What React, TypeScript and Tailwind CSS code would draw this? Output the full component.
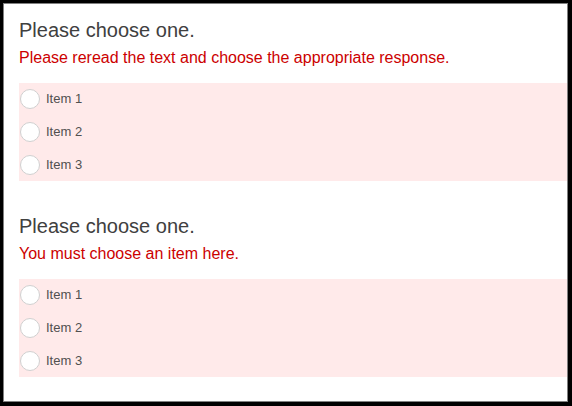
const items = ["Item 1", "Item 2", "Item 3"];

function Question({ error, first }: { error: string; first?: boolean }) {
  return (
    <div className={first ? "" : "mt-[33px]"}>
      <h3 className="text-[20px] leading-[24px] text-[#404040]">Please choose one.</h3>
      <p className="mt-[6px] text-[16px] leading-[20px] text-[#cc0000]">{error}</p>
      <div className="mt-[15px] bg-[#ffeaea]">
        {items.map((item, i) => (
          <label
            key={item}
            className={`flex items-center gap-[6px] pl-px ${i === 0 ? "h-8" : "h-[33px]"}`}
          >
            <span className="h-5 w-5 rounded-full border border-[#d0d0d0] bg-white" />
            <span className="text-[13px] text-[#505050]">{item}</span>
          </label>
        ))}
      </div>
    </div>
  );
}

export default function App() {
  return (
    <div
      className="h-[406px] w-[572px] border-t-[3px] border-l-[3px] border-r-4 border-b-4 border-black bg-white"
      style={{ fontFamily: '"Liberation Sans", Arial, sans-serif' }}
    >
      <div className="h-full border border-[#808080] pl-[15px] pt-[14px]">
        <Question first error="Please reread the text and choose the appropriate response." />
        <Question error="You must choose an item here." />
      </div>
    </div>
  );
}
